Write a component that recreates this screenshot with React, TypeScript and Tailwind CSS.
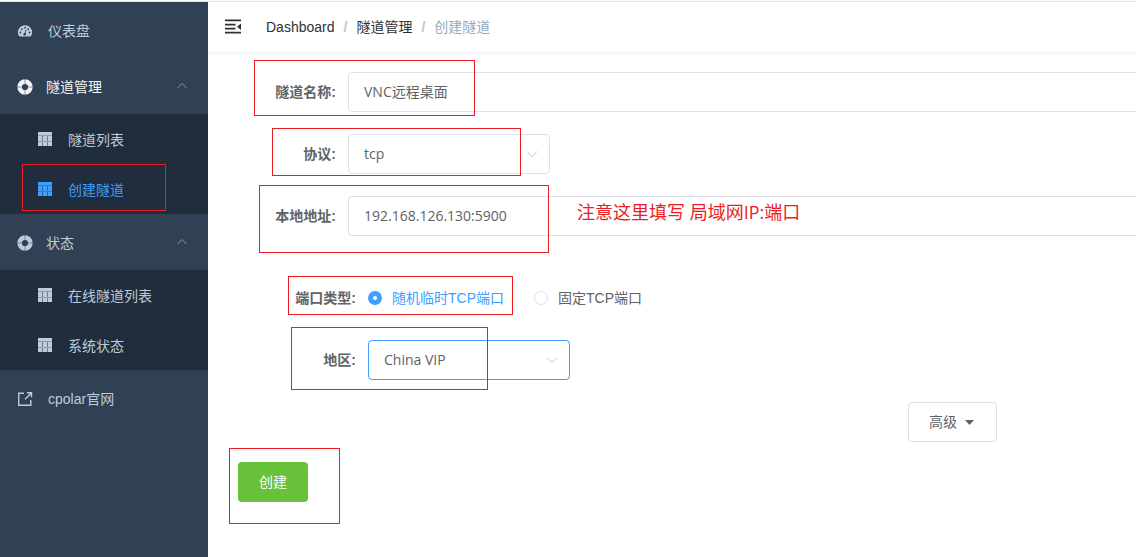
import { useState } from 'react';
import type { ReactNode } from 'react';
import clsx from 'clsx';

const DashboardIcon = () => (
  <svg className="h-4 w-4 shrink-0" viewBox="0 0 16 16" fill="none">
    <path
      d="M2.4 13.6C1.4 12.4.9 11 .9 9.3a7.1 7.1 0 0 1 14.2 0c0 1.7-.5 3.1-1.5 4.3z"
      fill="currentColor"
    />
    <g fill="#304156">
      <circle cx="3.4" cy="9.5" r="0.9" />
      <circle cx="4.8" cy="6.2" r="0.9" />
      <circle cx="8" cy="4.7" r="0.9" />
      <circle cx="11.2" cy="6.2" r="0.9" />
      <circle cx="12.6" cy="9.5" r="0.9" />
      <circle cx="7.7" cy="11.2" r="1.3" />
    </g>
    <path d="M7.8 11l1.3-4.2" stroke="#304156" strokeWidth="0.9" />
  </svg>
);

const HelpIcon = () => (
  <svg className="h-4 w-4 shrink-0" viewBox="0 0 16 16" fill="none">
    <circle cx="8" cy="8" r="5.4" stroke="currentColor" strokeWidth="4.6" />
    <path d="M8 0v5M8 11v5M0 8h5M11 8h5" stroke="#304156" strokeWidth="0.5" />
  </svg>
);

const TableIcon = () => (
  <svg className="h-3.5 w-3.5 shrink-0" viewBox="0 0 14 14" fill="currentColor">
    <path d="M0 0h14v3H0zM0 4h4v5H0zM5 4h4v5H5zM10 4h4v5h-4zM0 10h4v4H0zM5 10h4v4H5zM10 10h4v4h-4z" />
    <path d="M0 3h14v1H0zM0 9h14v1H0z" opacity="0.7" />
    <path d="M4 4h1v10H4zM9 4h1v10H9z" opacity="0.5" />
  </svg>
);

const LinkIcon = () => (
  <svg className="h-4 w-4 shrink-0" viewBox="0 0 16 16" fill="none" stroke="currentColor" strokeWidth="1.4">
    <path d="M7 2.2H1.7v12.1h12.1V9" />
    <path d="M10 1.7h4.5v4.5M14.3 1.9L8 8.2" />
  </svg>
);

const FoldIcon = () => (
  <svg className="h-4 w-4" viewBox="0 0 16 16" fill="currentColor">
    <path d="M0 .5h16v1.7H0zM0 4.7h10.5v1.7H0zM0 8.7h10.5v1.7H0zM0 12.8h16v1.7H0zM16 4.5v6.4l-4-3.2z" />
  </svg>
);

const Chevron = ({ up = false, className }: { up?: boolean; className?: string }) => (
  <svg className={clsx('h-3 w-3', className)} viewBox="0 0 12 12" fill="none" stroke="currentColor">
    <path d={up ? 'M1.5 8L6 3.5 10.5 8' : 'M1 3.5L6 8.5 11 3.5'} />
  </svg>
);

function MenuGroup({ title, active, children }: { title: string; active?: boolean; children: ReactNode }) {
  const [open, setOpen] = useState(true);

  return (
    <li>
      <button
        type="button"
        onClick={() => setOpen(!open)}
        className={clsx('flex h-14 w-full items-center pt-0.5 pr-5 pl-4', active ? 'text-[#f4f4f5]' : 'text-[#bfcbd9]')}
      >
        <span className="flex w-[30px] pl-px">
          <HelpIcon />
        </span>
        {title}
        <Chevron up={open} className="mb-0.5 ml-auto text-[#909399]" />
      </button>
      {open && <ul className="bg-[#1f2d3d]">{children}</ul>}
    </li>
  );
}

function SubItem({ label, active }: { label: string; active?: boolean }) {
  return (
    <li className="relative">
      <a href="#" className={clsx('flex h-[50px] items-center gap-4 pl-[38px]', active && 'text-[#409eff]')}>
        <TableIcon />
        <span className="pt-0.5">{label}</span>
      </a>
      {active && <Mark className="top-0 left-[22px] h-[47px] w-36" />}
    </li>
  );
}

// red highlight frame
const Mark = ({ className }: { className: string }) => (
  <span className={clsx('pointer-events-none absolute z-10 border border-[#ed1c24]', className)} />
);

function Field({ label, id, children }: { label: string; id?: string; children: ReactNode }) {
  return (
    <div className="relative flex min-h-10 items-center">
      <label htmlFor={id} className="w-30 shrink-0 pr-3 text-right font-bold">
        {label}
      </label>
      {children}
    </div>
  );
}

const control =
  "h-10 rounded border bg-white px-[15px] outline-none font-['Open_Sans','Noto_Sans_CJK_SC',sans-serif]";

function Select({ id, options, focused }: { id: string; options: string[]; focused?: boolean }) {
  return (
    <div className="relative">
      <select
        id={id}
        className={clsx(control, 'w-[202px] appearance-none', focused ? 'border-[#409eff]' : 'border-[#dcdfe6]')}
      >
        {options.map((o) => (
          <option key={o}>{o}</option>
        ))}
      </select>
      <Chevron className="pointer-events-none absolute top-3.5 right-3 text-[#c0c4cc]" />
    </div>
  );
}

function Radio({ label, checked, onChange }: { label: string; checked: boolean; onChange: () => void }) {
  return (
    <label className={clsx('flex items-center gap-2.5', checked && 'text-[#409eff]')}>
      <input
        type="radio"
        name="portType"
        checked={checked}
        onChange={onChange}
        className="h-3.5 w-3.5 appearance-none rounded-full border border-[#dcdfe6] bg-white checked:border-[5px] checked:border-[#409eff]"
      />
      {label}
    </label>
  );
}

export default function App() {
  const [portType, setPortType] = useState('random');

  return (
    <div className="flex min-h-screen flex-col bg-white font-['Liberation_Sans','Noto_Sans_CJK_SC',sans-serif] text-sm text-[#606266]">
      <div className="h-0.5 border-b border-[#dfe3cf] bg-[#fbfdf3]" />
      <div className="flex flex-1">
        <nav className="w-52 shrink-0 bg-[#304156] text-[#bfcbd9]">
          <ul>
            <li>
              <a href="#" className="flex h-14 items-center gap-[15px] pt-0.5 pl-[17px]">
                <DashboardIcon />
                仪表盘
              </a>
            </li>
            <MenuGroup title="隧道管理" active>
              <SubItem label="隧道列表" />
              <SubItem label="创建隧道" active />
            </MenuGroup>
            <MenuGroup title="状态">
              <SubItem label="在线隧道列表" />
              <SubItem label="系统状态" />
            </MenuGroup>
            <li>
              <a href="#" className="flex h-14 items-center gap-[15px] pt-0.5 pl-[17px]">
                <LinkIcon />
                cpolar官网
              </a>
            </li>
          </ul>
        </nav>

        <main className="min-w-0 flex-1 overflow-hidden">
          <header className="flex h-[50px] items-center gap-[25px] pl-[17px] text-[#303133] shadow-[0_1px_4px_rgba(0,21,41,0.08)]">
            <button type="button" aria-label="Toggle sidebar">
              <FoldIcon />
            </button>
            <ol className="flex items-center">
              <li>
                <a href="#">Dashboard</a>
              </li>
              <li className="px-[9px] font-bold text-[#c0c4cc]">/</li>
              <li>
                <a href="#">隧道管理</a>
              </li>
              <li className="px-[9px] font-bold text-[#c0c4cc]">/</li>
              <li className="text-[#97a8be]">创建隧道</li>
            </ol>
          </header>

          {/* the form is wider than the viewport and gets cut at the right edge */}
          <form className="w-[160%] py-5 pr-4 pl-5" onSubmit={(e) => e.preventDefault()}>
            <div className="flex flex-col gap-[22px]">
              <Field label="隧道名称:" id="name">
                <input id="name" defaultValue="VNC远程桌面" className={clsx(control, 'flex-1 border-[#dcdfe6] pb-0.5')} />
                <Mark className="-top-3 left-[26px] h-14 w-[221px]" />
              </Field>
              <Field label="协议:" id="protocol">
                <Select id="protocol" options={['tcp', 'http', 'tls']} />
                <Mark className="-top-1.5 left-11 h-12 w-[249px]" />
              </Field>
              <Field label="本地地址:" id="addr">
                <input
                  id="addr"
                  defaultValue="192.168.126.130:5900"
                  className={clsx(control, 'flex-1 border-[#dcdfe6] pb-0.5')}
                />
                <Mark className="-top-[11px] left-[31px] h-[68px] w-[290px]" />
                <span className="pointer-events-none absolute top-0.5 left-[349px] font-['Open_Sans','Noto_Sans_CJK_SC',sans-serif] text-lg text-[#ed1c24]">
                  注意这里填写 局域网IP:端口
                </span>
              </Field>
              <div className="flex flex-col gap-[22px] pt-5 pl-5">
                <Field label="端口类型:">
                  <div className="flex gap-[30px]">
                    <Radio label="随机临时TCP端口" checked={portType === 'random'} onChange={() => setPortType('random')} />
                    <Radio label="固定TCP端口" checked={portType === 'fixed'} onChange={() => setPortType('fixed')} />
                  </div>
                  <Mark className="-top-0.5 left-10 h-[39px] w-[225px]" />
                </Field>
                <Field label="地区:" id="region">
                  <Select id="region" options={['China VIP', 'China Top', 'United States']} focused />
                  <Mark className="-top-[13px] left-[43px] h-[63px] w-[197px]" />
                </Field>
              </div>
              <button
                type="button"
                className="flex h-10 items-center gap-2 self-center rounded border border-[#dcdfe6] bg-white pr-[22px] pl-5"
              >
                高级
                <svg className="h-[5px] w-[9px]" viewBox="0 0 9 5" fill="currentColor">
                  <path d="M0 0h9L4.5 5z" />
                </svg>
              </button>
            </div>
            <div className="relative mt-5 pl-2.5">
              <button type="submit" className="h-10 w-[70px] rounded bg-[#67c23a] text-white">
                创建
              </button>
              <Mark className="-top-3.5 left-px h-[76px] w-[111px]" />
            </div>
          </form>
        </main>
      </div>
    </div>
  );
}
